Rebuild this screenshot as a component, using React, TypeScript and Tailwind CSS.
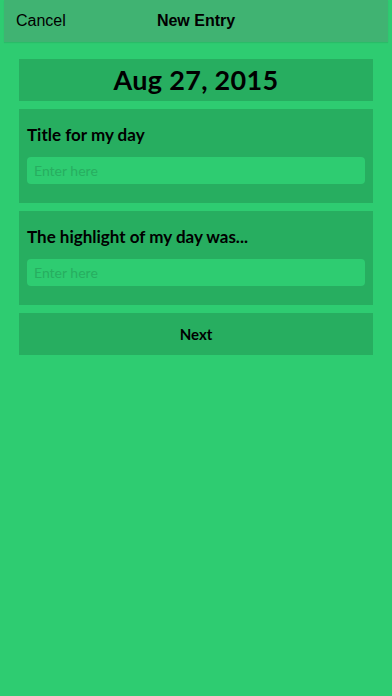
import React from "react";

export default function App() {
  const body = { fontFamily: "Lato, 'Noto Sans', sans-serif" };
  return (
    <div className="w-[392px] h-[696px] bg-[#2ecc71] flex flex-col">
      <div className="mx-[4px] h-[42px] bg-[#40b372] shadow-[0_1px_1px_rgba(0,0,0,0.08)] flex items-center relative" style={{ fontFamily: "'Liberation Sans', Arial, sans-serif" }}>
        <span className="pl-[12px] text-[16px] text-black">Cancel</span>
        <span className="absolute left-0 right-0 text-center text-[16px] font-bold text-black pointer-events-none">New Entry</span>
      </div>
      <div className="px-[19px] pt-[17px] flex flex-col gap-[8px]" style={body}>
        <div className="h-[42px] bg-[#27ae60] flex items-center justify-center">
          <span className="text-[27px] font-bold text-black tracking-[0.3px]">Aug 27, 2015</span>
        </div>
        <div className="h-[94px] bg-[#27ae60] px-[8px] pt-[14px] flex flex-col">
          <span className="text-[17px] font-bold text-black leading-[24px]">Title for my day</span>
          <div className="mt-[10px] h-[27px] rounded-[4px] bg-[#2ecc71] flex items-center px-[7px]">
            <span className="text-[14px] text-[#27ae60]">Enter here</span>
          </div>
        </div>
        <div className="h-[94px] bg-[#27ae60] px-[8px] pt-[14px] flex flex-col">
          <span className="text-[17px] font-bold text-black leading-[24px]">The highlight of my day was...</span>
          <div className="mt-[10px] h-[27px] rounded-[4px] bg-[#2ecc71] flex items-center px-[7px]">
            <span className="text-[14px] text-[#27ae60]">Enter here</span>
          </div>
        </div>
        <div className="h-[42px] bg-[#27ae60] flex items-center justify-center">
          <span className="text-[15px] font-bold text-black">Next</span>
        </div>
      </div>
    </div>
  );
}
